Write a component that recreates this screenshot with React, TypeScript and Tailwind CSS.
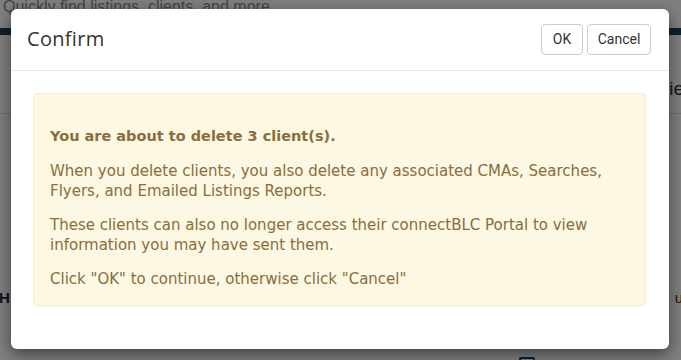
import React from 'react';

function PageBehind() {
    return (
        <div className="flex flex-col w-full h-full bg-white text-[#333]">
            <div className="h-[31px] px-[3px] -mt-[3px] text-[16px] leading-[20px] text-[#888]">
                Quickly find listings, clients, and more
            </div>
            <div className="h-[7px] bg-[#1c3e56]" />
            <div className="h-[78px] flex items-center justify-end overflow-hidden">
                <span className="text-[19px] whitespace-nowrap -mr-[3px] mt-[30px]">Clie</span>
            </div>
            <div className="border-t border-[#ddd]" />
            <div className="h-[174px]" />
            <div className="flex items-center justify-between h-[20px] text-[15px] font-bold text-[#1b2a3a]">
                <span className="-ml-[1px]">H</span>
                <span className="font-normal -mr-[2px]">u</span>
            </div>
            <div className="flex-1 flex items-end pl-[519px]">
                <div className="w-[16px] h-[16px] -mb-[13px] border-2 border-[#1c3e56] rounded-[2px]" />
            </div>
        </div>
    );
}

export default function App() {
    return (
        <div className="relative w-[681px] h-[360px] overflow-hidden font-['Liberation_Sans',sans-serif]">
            <PageBehind />
            <div className="absolute inset-0 bg-black/50" />

            <div className="absolute left-[11px] top-[9px] w-[658px] h-[340px] bg-white rounded-[6px] shadow-[0_5px_15px_rgba(0,0,0,0.5)] flex flex-col">
                <div className="h-[62px] flex items-center justify-between pl-[16px] pr-[18px] border-b border-[#e5e5e5]">
                    <h4 className="text-[20px] text-[#333] [font-family:'Open_Sans',sans-serif] -mt-[1px] tracking-[0.3px]">Confirm</h4>
                    <div className="flex gap-[4px] -mt-[1px] [font-family:Roboto,sans-serif] text-[14px] text-[#333]">
                        <button className="h-[31px] w-[42px] bg-white border border-[#ccc] rounded-[4px]">OK</button>
                        <button className="h-[31px] w-[64px] bg-white border border-[#ccc] rounded-[4px]">Cancel</button>
                    </div>
                </div>

                <div className="pt-[22px] pl-[22px] pr-[23px]">
                    <div className="bg-[#fcf8e3] border border-[#faebcc] rounded-[4px] px-[16px] pt-[15px] pb-[16px] text-[#8a6d3b] text-[15px] leading-[20px] [font-family:'DejaVu_Sans',sans-serif]">
                        <p className="mt-[17px] mb-[15px] font-bold text-[14.5px]">You are about to delete 3 client(s).</p>
                        <p className="mb-[14px]">
                            When you delete clients, you also delete any associated CMAs, Searches, Flyers, and Emailed Listings Reports.
                        </p>
                        <p className="mb-[14px]">
                            These clients can also no longer access their connectBLC Portal to view information you may have sent them.
                        </p>
                        <p>Click "OK" to continue, otherwise click "Cancel"</p>
                    </div>
                </div>
            </div>
        </div>
    );
}
